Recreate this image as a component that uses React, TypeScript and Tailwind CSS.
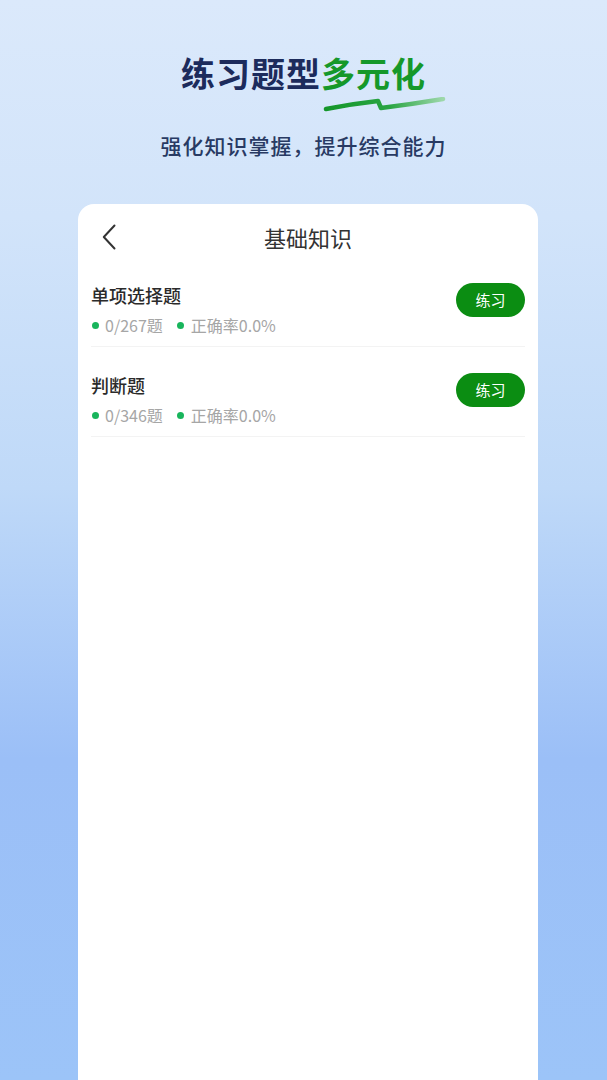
const items = [
  { id: 1, title: '单项选择题', done: 0, total: 267, rate: '0.0%' },
  { id: 2, title: '判断题', done: 0, total: 346, rate: '0.0%' },
];

function Swoosh() {
  return (
    <svg
      width="124"
      height="16"
      viewBox="0 0 124 16"
      className="absolute left-[2px] top-[100%]"
    >
      <defs>
        <linearGradient id="sw" x1="0" y1="0" x2="1" y2="0">
          <stop offset="0" stopColor="#14962a" />
          <stop offset="0.55" stopColor="#2aa544" />
          <stop offset="1" stopColor="#9ed8ab" />
        </linearGradient>
      </defs>
      <path
        d="M3 12 Q28 7 55 4 L58 11 Q90 7 120 2"
        fill="none"
        stroke="url(#sw)"
        strokeWidth="4.5"
        strokeLinecap="round"
        strokeLinejoin="round"
      />
    </svg>
  );
}

function BackArrow() {
  return (
    <svg
      width="14"
      height="26"
      viewBox="0 0 14 26"
      className="absolute left-[11px]"
    >
      <path
        d="M12.5 1.5 L1.8 13 L12.5 24.5"
        fill="none"
        stroke="#333333"
        strokeWidth="2"
        strokeLinecap="round"
        strokeLinejoin="round"
      />
    </svg>
  );
}

export default function App() {
  return (
    <div
      className="min-h-screen w-full overflow-hidden bg-[linear-gradient(180deg,#dbe9fb_0%,#d2e4fa_20%,#bfd9f8_45%,#9bbff7_70%,#9cc4f8_100%)]"
      style={{ fontFamily: '"Noto Sans CJK SC", "Noto Sans", sans-serif' }}
    >
      <div className="flex flex-col items-center pt-[52px]">
        <h1 className="text-[34px] leading-[42px] font-bold text-[#1c2b5c] tracking-[1px]">
          练习题型
          <span className="relative text-[#15982a]">
            多元化
            <Swoosh />
          </span>
        </h1>
        <p className="mt-[36px] text-[21px] leading-[30px] font-medium text-[#283a63] tracking-[1px]">
          强化知识掌握，提升综合能力
        </p>
      </div>

      <div className="ml-[78px] mt-[44px] min-h-[880px] w-[460px] rounded-t-[16px] bg-white px-[13px]">
        <div className="relative flex h-[66px] items-center justify-center">
          <BackArrow />
          <span className="text-[22px] text-[#333333]">基础知识</span>
        </div>

        <div className="-mt-[13px]">
          {items.map((item) => (
            <div
              key={item.id}
              className="flex items-start justify-between border-b border-[#f3f3f3] pt-[26px] pb-[11px]"
            >
              <div>
                <div className="text-[18px] leading-[24px] font-medium text-[#2b2b2b]">
                  {item.title}
                </div>
                <div className="mt-[8px] flex items-center text-[16px] leading-[20px] text-[#a6a6a6]">
                  <span className="mr-[6px] ml-[1px] h-[7px] w-[7px] rounded-full bg-[#18b55c]" />
                  <span>
                    {item.done}/{item.total}题
                  </span>
                  <span className="mr-[7px] ml-[14px] h-[7px] w-[7px] rounded-full bg-[#18b55c]" />
                  <span>正确率{item.rate}</span>
                </div>
              </div>
              <button className="flex h-[34px] w-[69px] items-center justify-center rounded-full bg-[#0b8d12] text-[15px] text-white">
                练习
              </button>
            </div>
          ))}
        </div>
      </div>
    </div>
  );
}
